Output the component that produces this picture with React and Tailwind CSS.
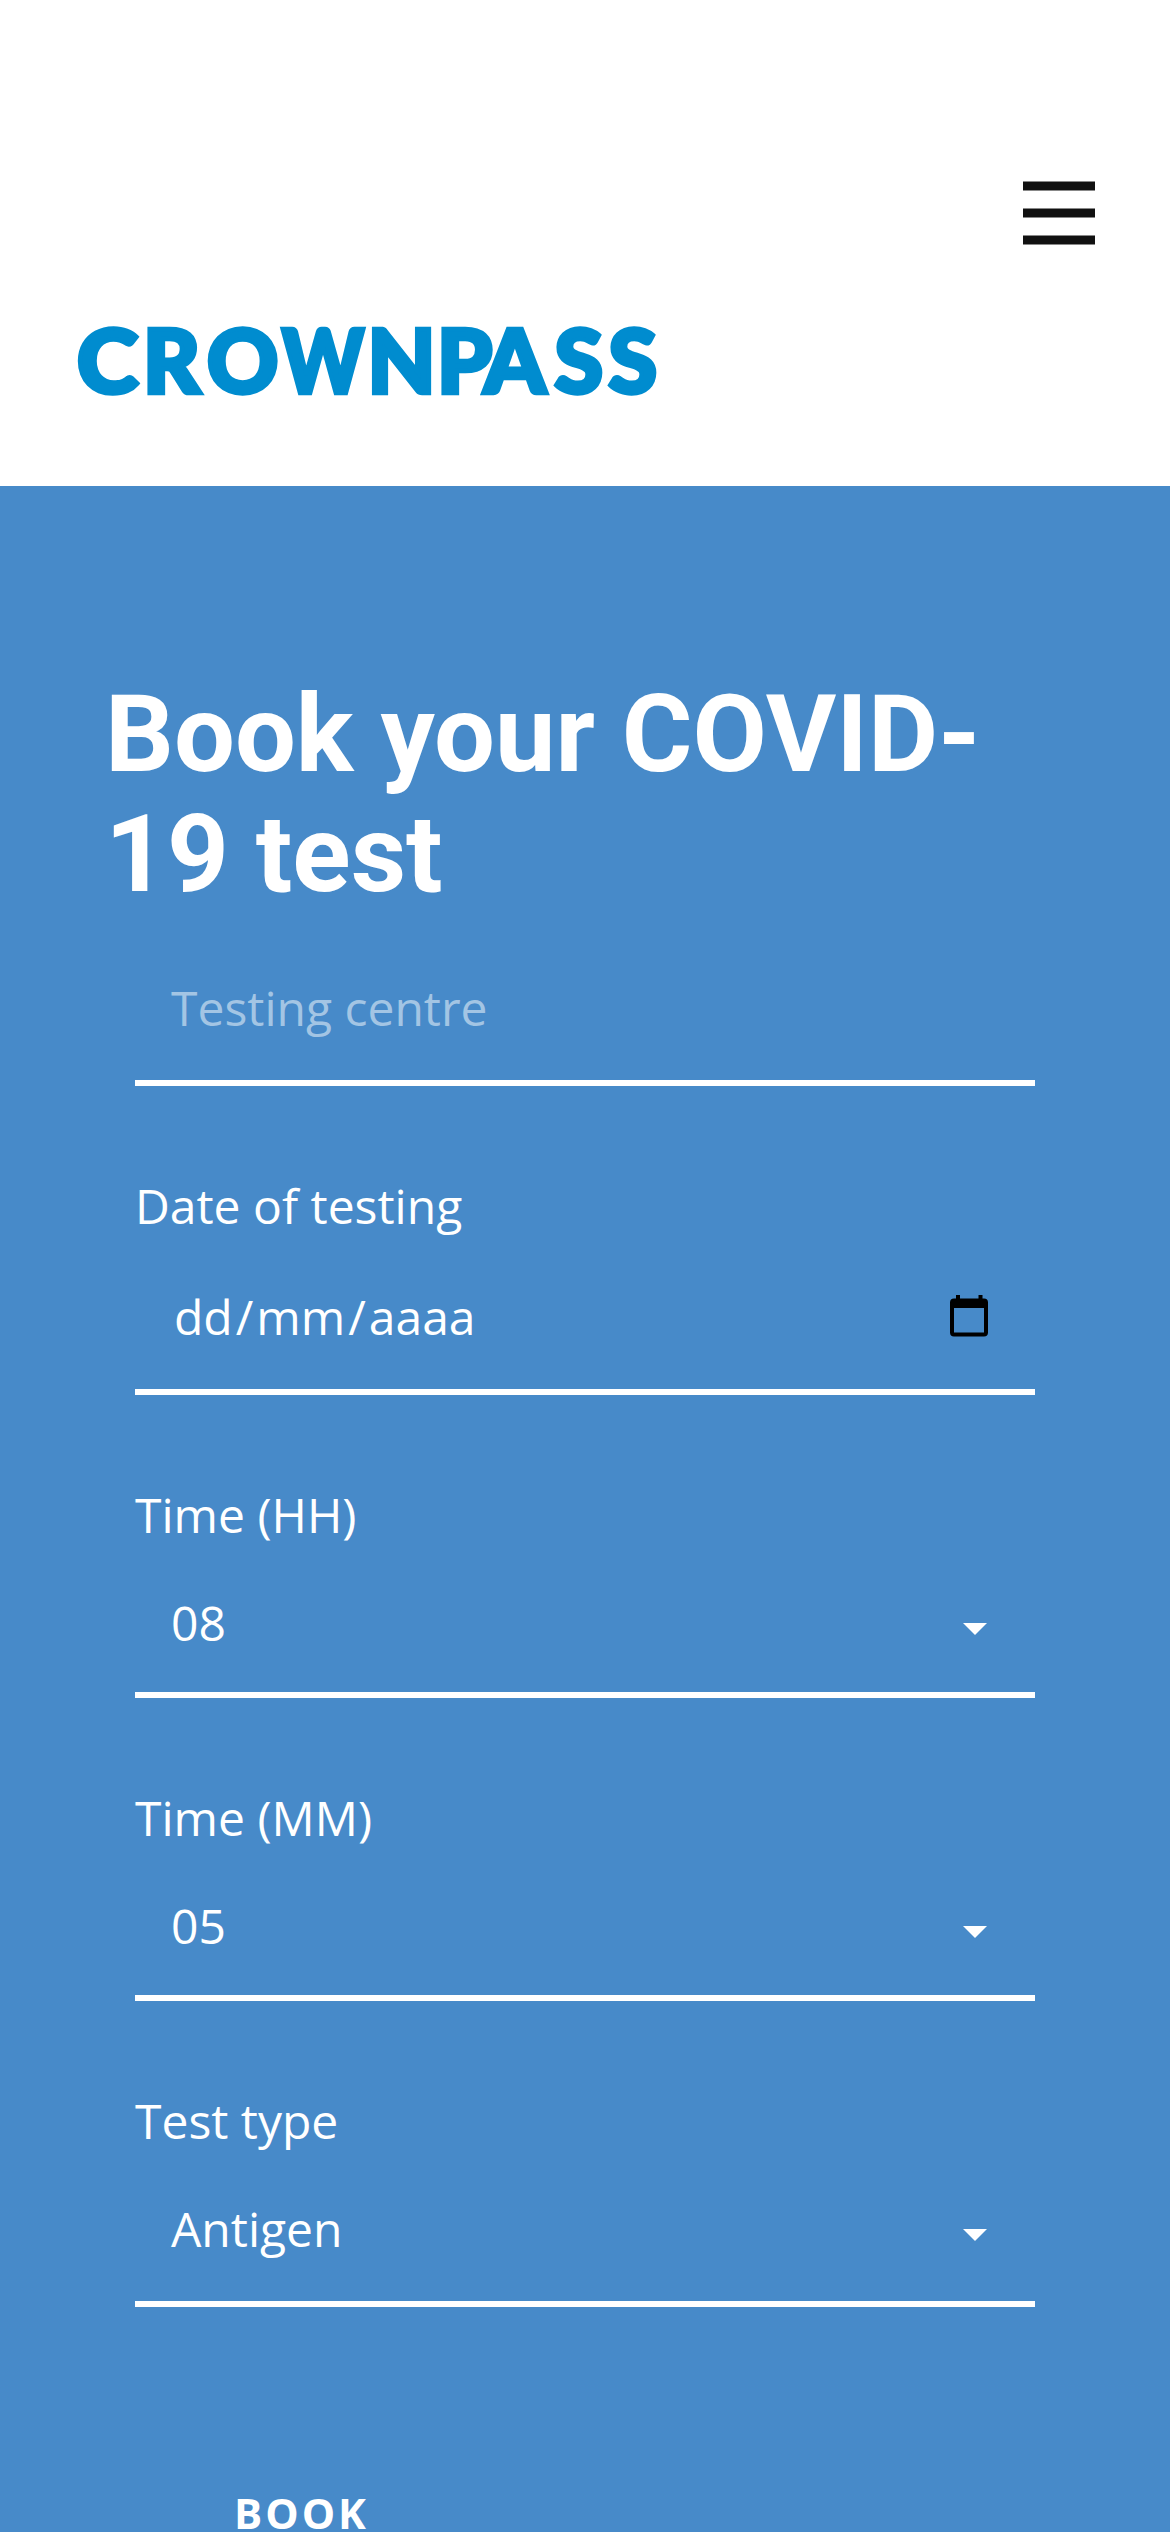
const Caret = () => (
  <svg className="mr-12 mt-[37px] h-3 w-6" viewBox="0 0 24 12" fill="#fff">
    <path d="M0 0H24L12 12Z" />
  </svg>
);

const CalendarIcon = () => (
  <svg className="mr-[47px] mt-[15px] h-[42px] w-[38px]" viewBox="0 0 38 42">
    <path
      fill="#000"
      fillRule="evenodd"
      d="M6 0h4v3.500h18.500V0h4v3.500h1.500a4 4 0 0 1 4 4V37.500a4 4 0 0 1-4 4H4a4 4 0 0 1-4-4V7.500a4 4 0 0 1 4-4h2zM4 13v24.500h30V13z"
    />
  </svg>
);

const Label = ({ children }) => <label className="block h-[72px] leading-[74px]">{children}</label>;

function SelectField({ label, value, className }) {
  return (
    <div className={className}>
      <Label>{label}</Label>
      <div className="mt-9 flex grow items-start justify-between border-b-[6px] border-white pl-9">
        <span className="leading-[74px]">{value}</span>
        <Caret />
      </div>
    </div>
  );
}

export default function App() {
  return (
    <div className="flex h-[2532px] w-[1170px] flex-col overflow-hidden bg-[#478ac9] font-['Open_Sans',sans-serif] text-[48px] text-white">
      <header className="flex h-[486px] shrink-0 flex-col bg-white">
        <button aria-label="Menu" className="mr-[75px] mt-[181px] flex w-[72px] flex-col gap-[17px] self-end">
          <span className="h-[10px] w-full border-y border-[#888] bg-[#111]" />
          <span className="h-[10px] w-full border-y border-[#888] bg-[#111]" />
          <span className="h-[10px] w-full border-y border-[#888] bg-[#111]" />
        </button>
        <svg className="ml-[75px] mt-[70px] h-[80px] w-[600px]" viewBox="75 315 600 80" overflow="visible" role="img" aria-label="CROWNPASS">
          <text
            y="392.7"
            fill="#008ccf"
            stroke="#008ccf"
            strokeWidth="4.5"
            className="font-['Lato',sans-serif] text-[88px] font-black"
          >
            <tspan x="77" textLength="61" lengthAdjust="spacingAndGlyphs">C</tspan>
            <tspan x="143">R</tspan>
            <tspan x="207">O</tspan>
            <tspan x="282" textLength="82" lengthAdjust="spacingAndGlyphs">W</tspan>
            <tspan x="367.500">N</tspan>
            <tspan x="437">P</tspan>
            <tspan x="484">A</tspan>
            <tspan x="554.500">S</tspan>
            <tspan x="608.500">S</tspan>
          </text>
        </svg>
      </header>

      <main className="flex flex-col pt-[188px]">
        <h1 className="ml-[105px] w-[960px] font-['Roboto',sans-serif] text-[108px] font-bold leading-[120px]">
          Book your COVID-
          <br />
          19 test
        </h1>
        <form className="ml-[135px] mt-[57px] w-[900px]">
          <div className="h-[115px] border-b-[6px] border-white pl-9 leading-[74px] text-[#a3c5e4]">Testing centre</div>

          <div className="mt-[83px] flex h-[226px] flex-col">
            <Label>Date of testing</Label>
            <div className="mt-[39px] flex grow items-start justify-between border-b-[6px] border-white pl-9">
              <span className="leading-[74px]">
                <span className="px-[3px]">dd</span>/<span className="px-[3px]">mm</span>/<span className="px-[3px]">aaaa</span>
              </span>
              <CalendarIcon />
            </div>
          </div>

          <SelectField label="Time (HH)" value="08" className="mt-[83px] flex h-[220px] flex-col" />
          <SelectField label="Time (MM)" value="05" className="mt-[83px] flex h-[220px] flex-col" />
          <SelectField label="Test type" value="Antigen" className="mt-[83px] flex h-[223px] flex-col" />

          <button type="button" className="ml-[99px] mt-[176px] block text-[42px] font-bold leading-[60px] tracking-[3px]">
            BOOK
          </button>
        </form>
      </main>
    </div>
  );
}
